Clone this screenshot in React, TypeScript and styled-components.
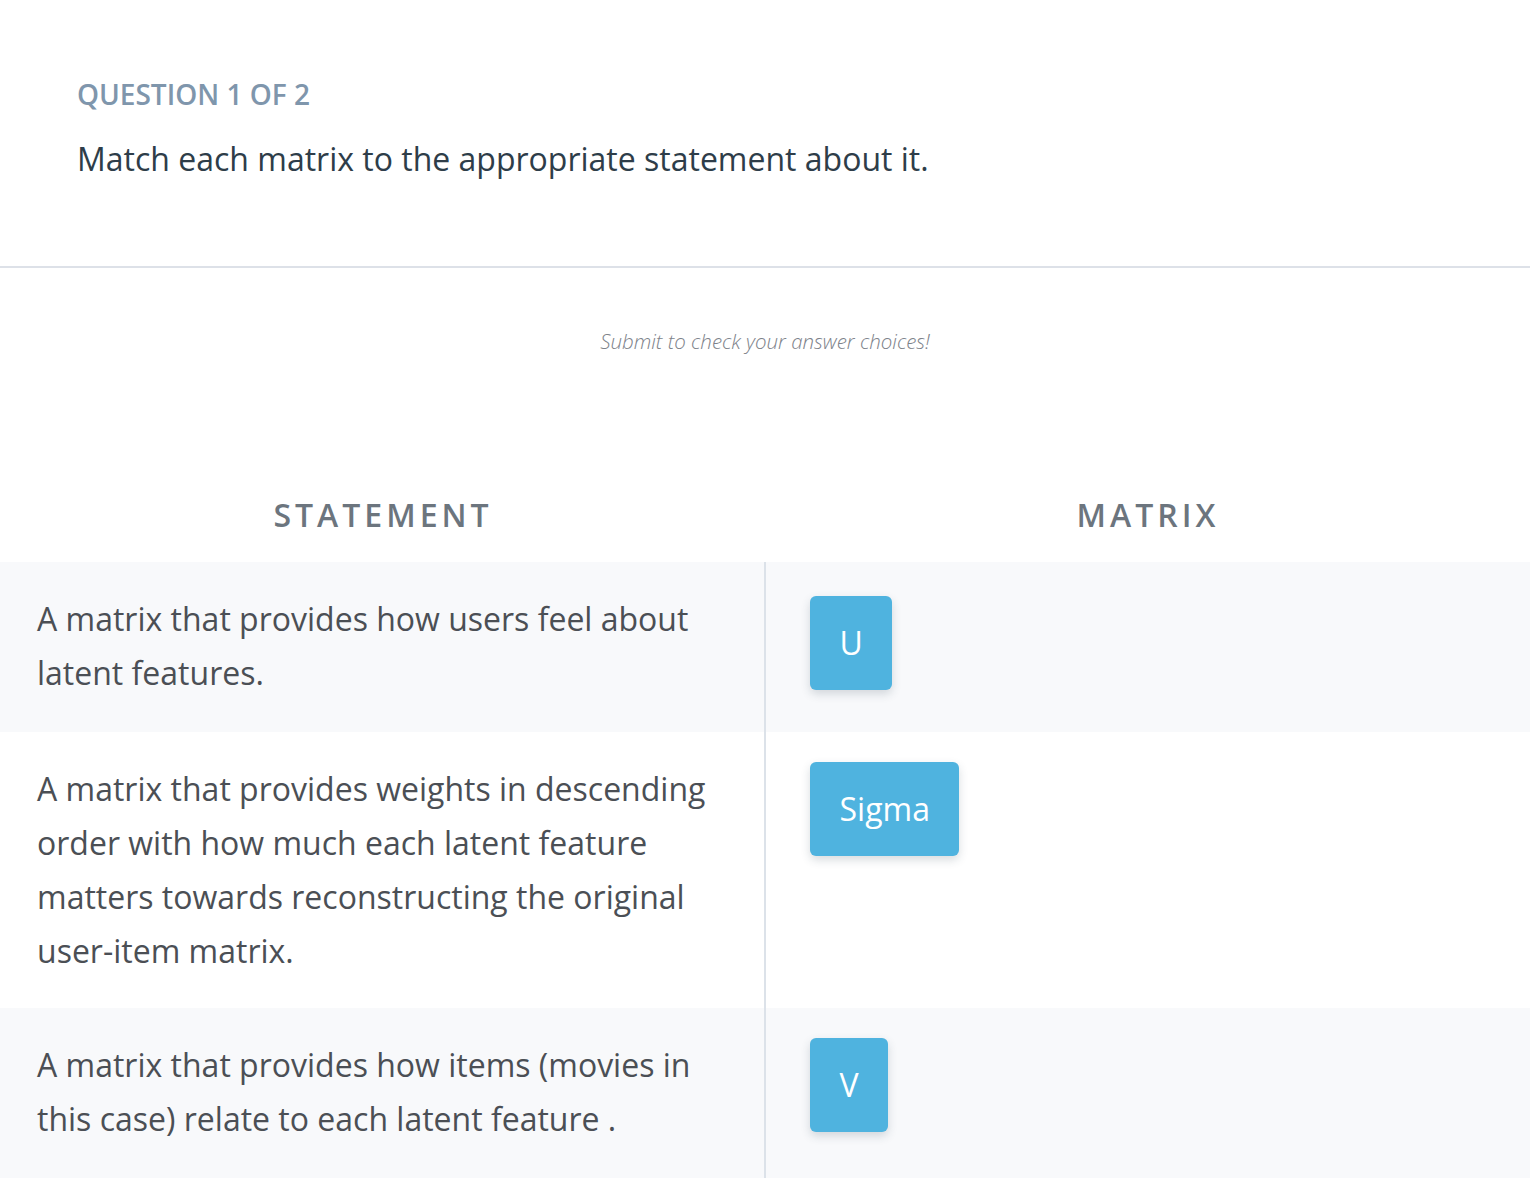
import React from "react";
import styled, { createGlobalStyle } from "styled-components";

const Global = createGlobalStyle`
  html, body { margin: 0; padding: 0; background: #ffffff; }
  body { font-family: "Open Sans", "DejaVu Sans", sans-serif; -webkit-font-smoothing: antialiased; }
`;

const Page = styled.div`
  width: 1530px;
  display: flex;
  flex-direction: column;
`;

const Header = styled.header`
  padding: 74px 77px 0;
  height: 192px;
  border-bottom: 2px solid #dde1e8;
`;

const Label = styled.div`
  font-size: 28px;
  font-weight: 600;
  color: #7f96ac;
  line-height: 40px;
`;

const Prompt = styled.div`
  margin-top: 23px;
  font-size: 32px;
  line-height: 44px;
  color: #2e3d49;
`;

const Notice = styled.div`
  margin-top: 59px;
  text-align: center;
  font-style: italic;
  font-weight: 300;
  font-size: 20.5px;
  line-height: 28px;
  color: #7d828a;
`;

const Table = styled.div`
  margin-top: 138px;
  display: grid;
  grid-template-columns: 766px 1fr;
`;

const HeadCell = styled.div`
  text-align: center;
  font-size: 32px;
  font-weight: 600;
  letter-spacing: 4px;
  color: #6c757e;
  line-height: 44px;
  padding-bottom: 25px;
`;

const StatementCell = styled.div<{ $shaded: boolean; $bottom: number }>`
  background: ${(p) => (p.$shaded ? "#f8f9fb" : "#ffffff")};
  padding: 30px 38px ${(p) => p.$bottom}px 37px;
  font-size: 32px;
  line-height: 54px;
  color: #4b4f55;
  border-right: 2px solid #dce2e9;
`;

const MatrixCell = styled.div<{ $shaded: boolean; $top: number }>`
  background: ${(p) => (p.$shaded ? "#f8f9fb" : "#ffffff")};
  padding: ${(p) => p.$top}px 44px 30px;
  display: flex;
  align-items: flex-start;
`;

const Chip = styled.div`
  background: #4fb3df;
  color: #ffffff;
  font-size: 32px;
  line-height: 54px;
  padding: 20px 29.5px;
  border-radius: 6px;
  box-shadow: 0 4px 10px rgba(40, 60, 80, 0.18);
`;

const rows = [
  { text: "A matrix that provides how users feel about latent features.", chip: "U", shaded: true, top: 34, bottom: 32 },
  {
    text: "A matrix that provides weights in descending order with how much each latent feature matters towards reconstructing the original user-item matrix.",
    chip: "Sigma",
    shaded: false,
    top: 30,
    bottom: 30,
  },
  { text: "A matrix that provides how items (movies in this case) relate to each latent feature .", chip: "V", shaded: true, top: 30, bottom: 32 },
];

export default function App() {
  return (
    <Page>
      <Global />
      <Header>
        <Label>QUESTION 1 OF 2</Label>
        <Prompt>Match each matrix to the appropriate statement about it.</Prompt>
      </Header>
      <Notice>Submit to check your answer choices!</Notice>
      <Table>
        <HeadCell>STATEMENT</HeadCell>
        <HeadCell>MATRIX</HeadCell>
        {rows.map((r) => (
          <React.Fragment key={r.chip}>
            <StatementCell $shaded={r.shaded} $bottom={r.bottom}>{r.text}</StatementCell>
            <MatrixCell $shaded={r.shaded} $top={r.top}>
              <Chip>{r.chip}</Chip>
            </MatrixCell>
          </React.Fragment>
        ))}
      </Table>
    </Page>
  );
}
